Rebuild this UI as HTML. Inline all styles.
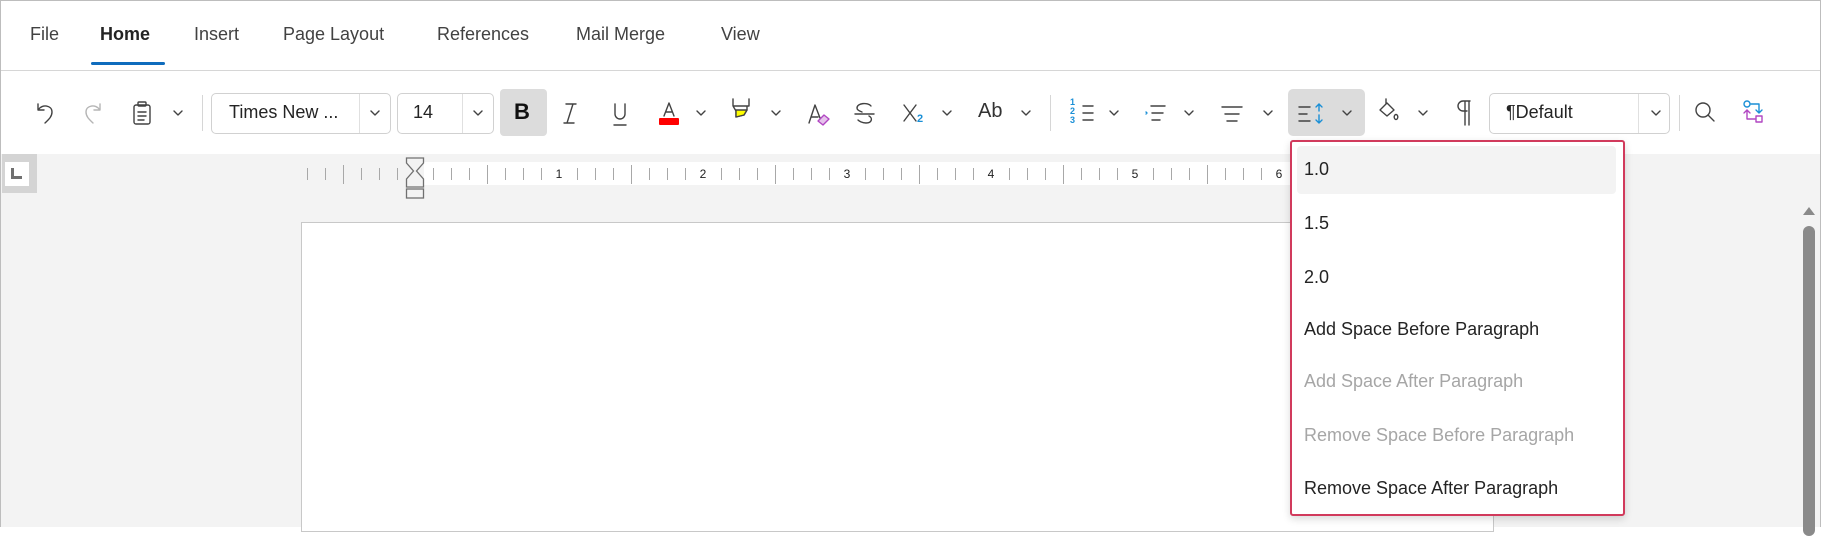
<!DOCTYPE html>
<html><head><meta charset="utf-8">
<style>
*{margin:0;padding:0;box-sizing:border-box}
body{width:1821px;height:527px;overflow:hidden;background:#fff;font-family:"Liberation Sans",Arial,sans-serif;position:relative;color:#242424}
.a{position:absolute}
.frame{position:absolute;left:0;top:0;width:1821px;height:527px;border:1px solid #bdbdbd;border-bottom:none;pointer-events:none}
.tab{position:absolute;top:24px;font-size:18px;color:#424242}
.box{position:absolute;border:1px solid #d1d1d1;border-radius:5px;background:#fff}
.sep{position:absolute;width:1px;height:36px;top:95px;background:#d6d6d6}
.item{position:absolute;left:1304px;font-size:18px;color:#242424}
.dis{color:#a6a6a6}
svg{position:absolute;overflow:visible}
</style></head><body>
<!-- tabs -->
<div class="tab" style="left:30px">File</div>
<div class="tab" style="left:100px;color:#242424;font-weight:bold">Home</div>
<div class="tab" style="left:194px">Insert</div>
<div class="tab" style="left:283px">Page Layout</div>
<div class="tab" style="left:437px">References</div>
<div class="tab" style="left:576px">Mail Merge</div>
<div class="tab" style="left:721px">View</div>
<div class="a" style="left:91px;top:62px;width:74px;height:3px;border-radius:2px;background:#0f6cbd"></div>
<div class="a" style="left:0;top:70px;width:1821px;height:1px;background:#d6d6d6"></div>

<!-- toolbar -->
<svg width="1821" height="60" style="left:0;top:85px;z-index:2" fill="none" stroke="#424242" stroke-width="1.4" stroke-linecap="round" stroke-linejoin="round">
 <g transform="translate(0,28)">
  <path d="M38 -9 L38 -3 L44 -3 M38.5 -3.5 C42 -9 52 -8 52 -1 C52 4 48 7 45 10"/>
  <path d="M100 -9 L100 -3 L94 -3 M99.5 -3.5 C96 -9 86 -8 86 -1 C86 4 90 7 93 10" stroke="#b5b5b5"/>
  <rect x="134" y="-8" width="16" height="19" rx="2"/><rect x="138" y="-11" width="8" height="4" rx="1"/>
  <path d="M138 -1h8M138 3h8M138 7h6"/>
  <path d="M174 -2l4 4 4-4"/>
  <path d="M371 -2l4 4 4-4M474 -2l4 4 4-4"/>
  <path d="M566 -9h10M564 10h10M573 -9l-6 19"/>
  <path d="M615 -9v10a5 5 0 0 0 10 0v-10M614 12h12"/>
  <path d="M664 3l5 -13 5 13M666 -1h6"/>
  <rect x="659" y="5" width="20" height="7" fill="#f00" stroke="none" rx="1"/>
  <path d="M697 -2l4 4 4-4"/>
  <path d="M733 -14v7h16v-7M733 -7l3 5v6l8 -2 3 -5v-4"/>
  <path d="M736 -2v6l8-2 3-5h-11z" fill="#ff0" stroke="#424242"/>
  <path d="M772 -2l4 4 4-4"/>
  <path d="M809 10l6 -18 5 13M811 4h7"/>
  <path d="M818 8l6 -6 5 4 -6 6z" stroke="#b146c2" fill="#e6c2ec"/>
  <path d="M871 -7c-3 -4 -14 -3 -14 2c0 2 2 3 5 4M855 1h19M869 3c4 2 3 7 -3 7c-4 0 -7 -2 -8 -3"/>
  <path d="M904 -8l12 16M916 -8l-12 16"/>
  <path d="M943 -2l4 4 4-4"/>
  <path d="M1022 -2l4 4 4-4"/>
  <path d="M1083 -7h10M1083 0h10M1083 7h10"/>
  <path d="M1110 -2l4 4 4-4"/>
  <path d="M1151 -7h14M1152 0h11M1152 7h8"/>
  <path d="M1146 -1l1 1-1 1" stroke="#1a8fd6"/>
  <path d="M1185 -2l4 4 4-4"/>
  <path d="M1222 -6h20M1225 1h14M1227 8h10"/>
  <path d="M1264 -2l4 4 4-4"/>
  <path d="M1299 -6h11M1299 1h8M1299 8h11"/>
  <path d="M1319 -9v7M1316 -6l3 -3 3 3M1319 2v8M1316 7l3 3 3-3" stroke="#1a8fd6"/>
  <path d="M1343 -2l4 4 4-4"/>
  <path d="M1386 -14v5M1380 -3l7 -7 7 7 -7 6z"/>
  <ellipse cx="1396" cy="4" rx="1.8" ry="2.5"/>
  <path d="M1419 -2l4 4 4-4"/>
  <path d="M1465 -12v24M1469 -12v24M1470 -12h-7a5 5 0 0 0 0 10h4"/>
  <path d="M1652 -2l4 4 4-4"/>
  <circle cx="1703" cy="-3" r="7"/><path d="M1708 2l6 6"/>
  <circle cx="1747" cy="-9" r="3" stroke="#1a8fd6"/>
  <path d="M1751 -9h8v9M1756 -3l3 3 3-3" stroke="#1a8fd6"/>
  <path d="M1747 -3v9h8M1744 0l3 -3 3 3" stroke="#b146c2"/>
  <rect x="1756" y="3" width="6" height="6" stroke="#b146c2"/>
 </g>
</svg>
<div class="sep" style="left:202px"></div>
<div class="box" style="left:211px;top:93px;width:180px;height:41px"></div>
<div class="a" style="left:359px;top:94px;width:1px;height:39px;background:#e0e0e0"></div>
<div class="a" style="left:229px;top:102px;font-size:18px">Times New ...</div>
<div class="box" style="left:397px;top:93px;width:97px;height:41px"></div>
<div class="a" style="left:462px;top:94px;width:1px;height:39px;background:#e0e0e0"></div>
<div class="a" style="left:413px;top:102px;font-size:18px">14</div>
<div class="a" style="left:500px;top:89px;width:47px;height:47px;background:#dcdcdc;border-radius:4px"></div>
<div class="a" style="left:514px;top:99px;font-size:22px;font-weight:bold;color:#111">B</div>
<div class="a" style="left:917px;top:113px;font-size:11px;font-weight:bold;color:#1a8fd6">2</div>
<div class="a" style="left:978px;top:100px;font-size:20px;color:#333">Ab</div>
<div class="sep" style="left:1050px"></div>
<div class="a" style="left:1070px;top:98px;font-size:9px;line-height:9px;font-weight:bold;color:#1a8fd6">1<br>2<br>3</div>
<div class="a" style="left:1288px;top:89px;width:77px;height:47px;background:#dcdcdc;border-radius:5px;z-index:-1"></div>
<div class="box" style="left:1489px;top:93px;width:181px;height:41px"></div>
<div class="a" style="left:1638px;top:94px;width:1px;height:39px;background:#e0e0e0"></div>
<div class="a" style="left:1506px;top:102px;font-size:18px">¶Default</div>
<div class="sep" style="left:1679px"></div>

<!-- gray area -->
<div class="a" style="left:0;top:154px;width:1821px;height:373px;background:#f3f3f3"></div>
<div class="a" style="left:2px;top:154px;width:35px;height:39px;background:#d4d4d4"></div>
<div class="a" style="left:5px;top:162px;width:24px;height:24px;background:#fff"></div>
<div class="a" style="left:11px;top:168px;width:11px;height:11px;border-left:3px solid #707070;border-bottom:3px solid #707070"></div>
<div class="a" style="left:424px;top:162px;width:870px;height:23px;background:#fff"></div>
<svg id="rul" width="1821" height="60" style="left:0;top:154px" stroke="#a8a8a8" stroke-width="1"></svg>
<svg width="20" height="45" style="left:405px;top:157px" fill="#f3f3f3" stroke="#707070" stroke-width="1.3">
 <path d="M1.5 1h17v5l-7 8 7 8v8h-17v-8l7-8-7-8z"/><rect x="1.5" y="32" width="17" height="9"/>
</svg>
<div class="a" style="left:301px;top:222px;width:1193px;height:310px;background:#fff;border:1px solid #c8c8c8"></div>

<!-- scrollbar -->
<svg width="14" height="10" style="left:1802px;top:205px"><path d="M1 10L7 2 13 10z" fill="#8a8a8a"/></svg>
<div class="a" style="left:1803px;top:226px;width:12px;height:310px;border-radius:6px;background:#8a8a8a"></div>

<!-- dropdown -->
<div class="a" style="left:1290px;top:140px;width:335px;height:376px;background:#fff;border:2px solid #d13a5c;border-radius:3px;box-shadow:0 3px 8px rgba(0,0,0,.15)"></div>
<div class="a" style="left:1297px;top:146px;width:319px;height:48px;background:#f3f3f3;border-radius:4px"></div>
<div class="item" style="top:159px">1.0</div>
<div class="item" style="top:213px">1.5</div>
<div class="item" style="top:267px">2.0</div>
<div class="item" style="top:319px">Add Space Before Paragraph</div>
<div class="item dis" style="top:371px">Add Space After Paragraph</div>
<div class="item dis" style="top:425px">Remove Space Before Paragraph</div>
<div class="item" style="top:478px">Remove Space After Paragraph</div>

<div class="frame"></div>
<script>
var s=document.getElementById('rul'),h='';
for(var k=0;k<55;k++){var x=307+18*k;if(x>1290)break;var m=((k-6)%8+8)%8;
 if(k==6)continue;
 if(m==0){h+='<text x="'+x+'" y="24" font-size="12" text-anchor="middle" fill="#222" stroke="none" font-family="Liberation Sans">'+((k-6)/8)+'</text>';}
 else if(m==4){h+='<line x1="'+(x+.5)+'" y1="11" x2="'+(x+.5)+'" y2="30"/>';}
 else{h+='<line x1="'+(x+.5)+'" y1="14" x2="'+(x+.5)+'" y2="26"/>';}}
s.innerHTML=h;
</script>
</body></html>
